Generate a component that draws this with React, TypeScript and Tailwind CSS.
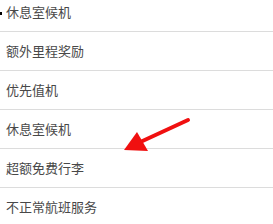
const items = ['休息室候机', '额外里程奖励', '优先值机', '休息室候机', '超额免费行李', '不正常航班服务'];

export default function App() {
  return (
    <div
      className="relative w-[273px] h-[224px] overflow-hidden bg-white"
      style={{ fontFamily: '"Noto Sans CJK SC", "Noto Sans", sans-serif' }}
    >
      <div className="-mt-[7px]">
        {items.map((label, i) => (
          <div
            key={i}
            className="relative flex h-[39px] items-center border-b border-[#dcdcdc] pl-[6px] text-[13px] text-[#484848]"
          >
            {i === 0 && <span className="absolute left-0 top-[19px] h-[3px] w-[2px] bg-black" />}
            {label}
          </div>
        ))}
      </div>
      <svg className="absolute left-0 top-0" width="273" height="224" viewBox="0 0 273 224">
        <line x1="188" y1="120" x2="136" y2="144" stroke="#f01010" strokeWidth="4" strokeLinecap="round" />
        <polygon points="124,150 137,132 148,151" fill="#f01010" />
      </svg>
    </div>
  );
}
